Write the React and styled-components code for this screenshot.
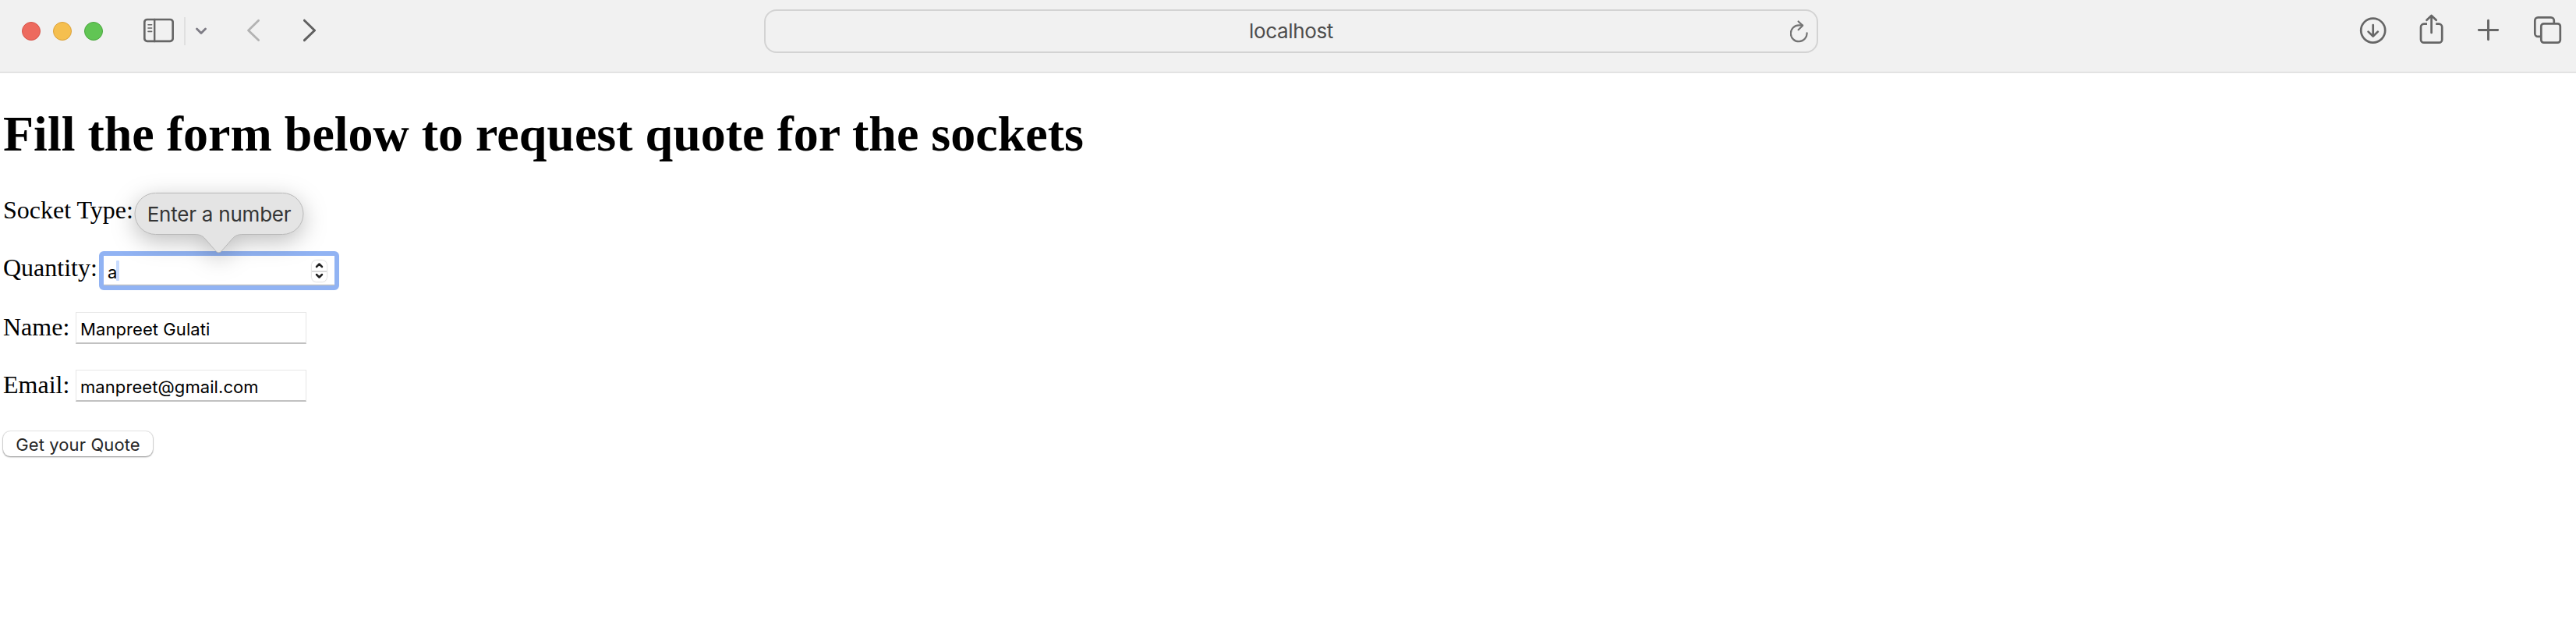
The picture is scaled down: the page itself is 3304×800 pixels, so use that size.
import React from "react";
import styled, { createGlobalStyle } from "styled-components";

const GlobalStyle = createGlobalStyle`
  *, *::before, *::after { box-sizing: border-box; }
  body { margin: 0; background: #fff; overflow: hidden; }
`;

const sans = `Inter, "Liberation Sans", sans-serif`;
const serif = `"Liberation Serif", "Times New Roman", serif`;

const Window = styled.div`
  min-height: 800px;
  background: #fff;
  color: #000;
`;

const Toolbar = styled.header`
  display: flex;
  align-items: center;
  height: 94px;
  padding-bottom: 13px;
  background: #f1f1f1;
  border-bottom: 1px solid #f4f4f4;
  box-shadow: inset 0 -1px 0 #d5d5d5;
`;

const LeftTools = styled.div`
  display: flex;
  align-items: center;
  width: 980px;
  padding-left: 28px;
`;

const Lights = styled.div`
  display: flex;
  gap: 16px;
  margin-right: 40px;
`;

const Light = styled.span`
  width: 24px;
  height: 24px;
  border-radius: 50%;
  background: ${(p) => p.$fill};
  border: 1px solid ${(p) => p.$edge};
`;

const Divider = styled.span`
  width: 2px;
  height: 36px;
  background: #e0e0e0;
  margin: 0 13px;
`;

const Icon = styled.svg`
  display: block;
  flex: none;
  fill: none;
  stroke: ${(p) => p.$color || "#666"};
  stroke-width: ${(p) => p.$weight || 2.7};
  stroke-linecap: round;
  stroke-linejoin: round;
  margin-left: ${(p) => p.$before || 0}px;
`;

const AddressBar = styled.div`
  display: grid;
  grid-template-columns: 60px 1fr 60px;
  align-items: center;
  width: 1352px;
  height: 56px;
  border: 2px solid #d3d3d3;
  border-radius: 16px;
`;

const Address = styled.span`
  grid-column: 2;
  text-align: center;
  font: 400 26px/32px ${sans};
  letter-spacing: -0.36px;
  color: #4d4d4d;
`;

const RightTools = styled.div`
  display: flex;
  flex: 1;
  justify-content: flex-end;
  padding-right: 17px;
`;

const Page = styled.main`
  padding: 41px 4px 0;
`;

const Title = styled.h1`
  margin: 0 0 34px;
  font: 700 64px/74px ${serif};
  white-space: nowrap;
`;

const Row = styled.div`
  position: relative;
  display: flex;
  align-items: flex-start;
  height: 74px;
`;

const Label = styled.label`
  margin-top: ${(p) => p.$drop || 8}px;
  width: ${(p) => p.$width}px;
  font: 400 32px/36px ${serif};
  white-space: nowrap;
`;

const Field = styled.div`
  display: flex;
  align-items: center;
  margin-top: 9px;
  width: 296px;
  height: 41px;
  padding: 4px 5px 0;
  border: 1px solid #e6e6e6;
  border-bottom: 2px solid #c1c1c1;
  font: 400 22px/28px ${sans};
  letter-spacing: 0.08px;
  white-space: nowrap;
`;

const FocusedField = styled.div`
  display: flex;
  align-items: center;
  margin-top: 5px;
  width: 308px;
  height: 50px;
  border: 6px solid #91b3f3;
  border-radius: 6px;
  padding: 0 10px 0 5px;
  box-shadow: inset 0 -1px 0 #c1c1c1, inset 0 -2px 0 #eee;
  font: 400 22px/28px ${sans};
`;

const Typed = styled.span`
  padding-top: 3px;
  width: 11px;
`;

const Caret = styled.span`
  width: 4px;
  height: 26px;
  border-radius: 1px;
  background: #c9dcff;
`;

const Stepper = styled.span`
  display: grid;
  grid-template-rows: 1fr 1fr;
  place-items: center;
  width: 19px;
  height: 27px;
  margin-left: auto;
  border-radius: 6px;
  background: linear-gradient(#fff 12.5px, #d9d9d9 12.5px, #d9d9d9 14.5px, #fff 14.5px);
  box-shadow: 0 0 2px rgba(0, 0, 0, 0.38);
`;

const Balloon = styled.div`
  position: absolute;
  left: 169px;
  top: -70px;
  width: 216px;
  height: 78px;
`;

const BalloonShape = styled.svg`
  position: absolute;
  inset: 0;
  overflow: visible;
  fill: #e4e4e4;
  stroke: #b8b8b8;
  stroke-width: 1;
  filter: drop-shadow(0 8px 15px rgba(0, 0, 0, 0.26));
`;

const BalloonText = styled.div`
  position: relative;
  text-align: center;
  font: 400 26px/56px ${sans};
  letter-spacing: -0.22px;
  color: #353535;
  white-space: nowrap;
`;

const QuoteButton = styled.button`
  display: block;
  width: 192px;
  height: 32px;
  margin: 14px 0 0;
  padding: 2px 0 0;
  border: 0;
  border-radius: 9px;
  background: #fff;
  box-shadow: 0 0 1px 1px rgba(0, 0, 0, 0.1), 0 1px 2px rgba(0, 0, 0, 0.4);
  font: 400 22px/30px ${sans};
  letter-spacing: 0.1px;
  color: #262626;
  white-space: nowrap;
`;

export default function App() {
  return (
    <Window>
      <GlobalStyle />
      <Toolbar>
        <LeftTools>
          <Lights>
            <Light $fill="#ed6a5e" $edge="#d6554b" />
            <Light $fill="#f5bf4f" $edge="#dba13a" />
            <Light $fill="#61c554" $edge="#4ba73f" />
          </Lights>
          <Icon $before={12} width="39" height="44" viewBox="184 18 39 44">
            <rect x="185.3" y="25" width="36.4" height="27.8" rx="3.5" />
            <path d="M198.2 25V53" strokeWidth="2.4" />
            <path d="M190 31.8h4.6M190 36h4.6M190 40.4h4.6" strokeWidth="1.6" />
          </Icon>
          <Divider />
          <Icon $color="#7e7c85" $weight={2.8} width="14" height="44" viewBox="251 18 14 44">
            <path d="M252.5 37l5.5 5.5 5.5-5.5" />
          </Icon>
          <Icon $before={52} $color="#b3b3b3" $weight={2.8} width="16" height="44" viewBox="317 18 16 44">
            <path d="M331.6 26.2L318.6 39l13 12.6" />
          </Icon>
          <Icon $before={56} $color="#606060" $weight={3} width="16" height="44" viewBox="389 18 16 44">
            <path d="M390.4 26.2L403.5 39l-13.1 12.6" />
          </Icon>
        </LeftTools>
        <AddressBar>
          <Address>localhost</Address>
          <Icon $before={26} $color="#737373" $weight={2.2} width="24" height="44" viewBox="2296 18 24 44">
            <path d="M2317.6 42.3A10.4 10.4 0 1 1 2307.2 32.4h4.6" />
            <path d="M2306.6 27.5l5.6 5.3-5.6 5.4" />
          </Icon>
        </AddressBar>
        <RightTools>
          <Icon width="36" height="44" viewBox="3026 18 36 44">
            <circle cx="3043.7" cy="39.1" r="15.5" />
            <path d="M3043.7 32v14.2M3037.6 40.6l6.1 6 6.1-6" />
          </Icon>
          <Icon $before={41} width="32" height="44" viewBox="3103 18 32 44">
            <path d="M3113 30.7h-4a4 4 0 0 0-4 4v16a4 4 0 0 0 4 4h19.2a4 4 0 0 0 4-4v-16a4 4 0 0 0-4-4h-4" strokeLinecap="butt" />
            <path d="M3118.6 42V20.5M3112.5 25.7l6.1-5.8 6.1 5.8" />
          </Icon>
          <Icon $before={42} $weight={2.9} width="30" height="44" viewBox="3177 18 30 44">
            <path d="M3191.5 26.3v24.4M3179.3 38.5h24.4" />
          </Icon>
          <Icon $before={42} width="38" height="44" viewBox="3249 18 38 44">
            <rect x="3259.3" y="30.3" width="24.5" height="24.4" rx="3.5" />
            <path d="M3258.5 46.9h-3.2a4 4 0 0 1-4-4V26.4a4 4 0 0 1 4-4h16.5a4 4 0 0 1 4 4v2.6" strokeLinecap="butt" />
          </Icon>
        </RightTools>
      </Toolbar>
      <Page>
        <Title>Fill the form below to request quote for the sockets</Title>
        <Row>
          <Label $width={168}>Socket Type:</Label>
        </Row>
        <Row>
          <Label $width={123}>Quantity:</Label>
          <FocusedField>
            <Typed>a</Typed>
            <Caret />
            <Stepper>
              <Icon $color="#222" $weight={2.5} width="11" height="8" viewBox="0 0 11 8">
                <path d="M2 6l3.5-3.5L9 6" />
              </Icon>
              <Icon $color="#222" $weight={2.5} width="11" height="8" viewBox="0 0 11 8">
                <path d="M2 2l3.5 3.5L9 2" />
              </Icon>
            </Stepper>
          </FocusedField>
          <Balloon>
            <BalloonShape width="216" height="78" viewBox="0 0 216 78">
              <path d="M26.5 .5H189.5A26.3 26.3 0 0 1 189.5 53.5H139C133 53.5 129 54.5 125 59L111.5 74.5Q107.5 79 103.5 74.5L90 59C86 54.5 82 53.5 76 53.5H26.5A26.3 26.3 0 0 1 26.5 .5Z" />
            </BalloonShape>
            <BalloonText>Enter a number</BalloonText>
          </Balloon>
        </Row>
        <Row>
          <Label $width={93} $drop={10}>Name:</Label>
          <Field>Manpreet Gulati</Field>
        </Row>
        <Row>
          <Label $width={93} $drop={10}>Email:</Label>
          <Field>manpreet@gmail.com</Field>
        </Row>
        <QuoteButton type="button">Get your Quote</QuoteButton>
      </Page>
    </Window>
  );
}
